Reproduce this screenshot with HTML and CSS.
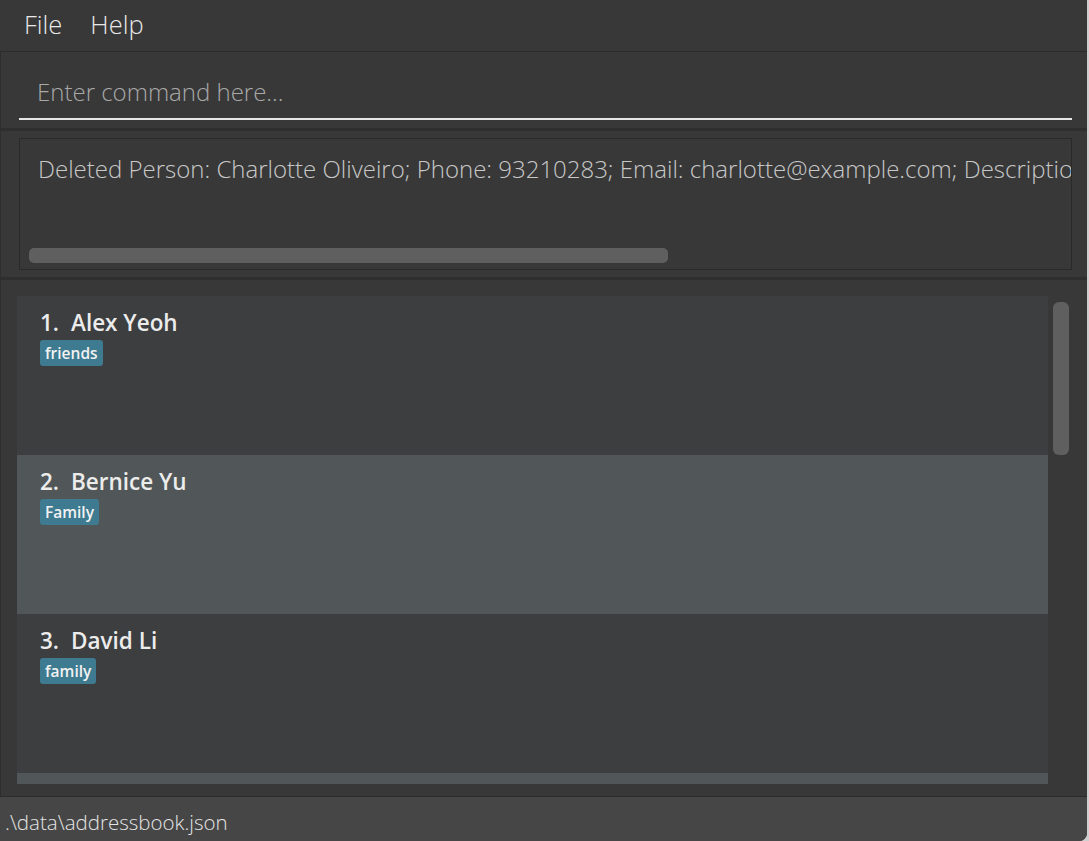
FILE: index.html
```html
<!DOCTYPE html>
<html>
<head>
<meta charset="utf-8">
<link rel="stylesheet" href="styles.css">
</head>
<body>
<div class="app">
  <div class="menubar">
    <span class="menu-item">File</span>
    <span class="menu-item">Help</span>
  </div>
  <div class="command-pane">
    <div class="command-field">Enter command here...</div>
  </div>
  <div class="result-pane">
    <div class="result-box">
      <div class="result-text">Deleted Person: Charlotte Oliveiro; Phone: 93210283; Email: charlotte@example.com; Description: </div>
      <div class="hscroll"><div class="hthumb"></div></div>
    </div>
  </div>
  <div class="list-pane">
    <div class="list">
      <div class="cell even">
        <div class="name"><span class="idx">1.</span>Alex Yeoh</div>
        <div class="tags"><span class="tag">friends</span></div>
      </div>
      <div class="cell odd">
        <div class="name"><span class="idx">2.</span>Bernice Yu</div>
        <div class="tags"><span class="tag">Family</span></div>
      </div>
      <div class="cell even">
        <div class="name"><span class="idx">3.</span>David Li</div>
        <div class="tags"><span class="tag">family</span></div>
      </div>
      <div class="cell odd"></div>
    </div>
    <div class="vscroll"><div class="vthumb"></div></div>
  </div>
  <div class="statusbar">.\data\addressbook.json</div>
</div>
</body>
</html>
```
FILE: styles.css
```css
html, body {
  margin: 0;
  padding: 0;
  background: #cfcfcf;
  height: 841px;
  overflow: hidden;
}
.app {
  width: 1087px;
  height: 841px;
  background: #383838;
  display: flex;
  flex-direction: column;
  font-family: "Open Sans", "Liberation Sans", sans-serif;
  border-bottom-right-radius: 8px;
  overflow: hidden;
}
.menubar {
  flex: 0 0 52px;
  display: flex;
  align-items: center;
  gap: 28px;
  padding-left: 24px;
  border-bottom: 1px solid #2c2c2c;
  box-sizing: border-box;
}
.menu-item {
  color: #e8e8e8;
  font-size: 25.5px;
  font-weight: 300;
  line-height: 1;
  position: relative;
  top: -1px;
}
.command-pane {
  flex: 0 0 79px;
  box-sizing: border-box;
  padding: 0 15px 0 18px;
  border-bottom: 3px solid #2e2e2e;
  border-left: 1px solid #2e2e2e;
  display: flex;
  align-items: flex-end;
}
.command-field {
  flex: 1;
  height: 50px;
  box-sizing: border-box;
  border-bottom: 2px solid #e6e6e6;
  color: #a8a8a8;
  font-size: 24px;
  font-weight: 300;
  padding-left: 18px;
  line-height: 26px;
  padding-top: 9px;
  margin-bottom: 8px;
}
.result-pane {
  flex: 0 0 149px;
  box-sizing: border-box;
  padding: 7px 15px 7px 18px;
  border-bottom: 3px solid #2e2e2e;
  border-left: 1px solid #2e2e2e;
}
.result-box {
  height: 100%;
  box-sizing: border-box;
  border: 1px solid #2a2a2a;
  position: relative;
  overflow: hidden;
  padding: 15px 0 0 18px;
}
.result-text {
  color: #c8c8c8;
  font-size: 24px;
  font-weight: 300;
  white-space: nowrap;
  line-height: 30px;
}
.hscroll {
  position: absolute;
  left: 9px;
  right: 0;
  bottom: 6px;
  height: 15px;
}
.hthumb {
  width: 639px;
  height: 15px;
  border-radius: 5px;
  background: #5f5f5f;
}
.list-pane {
  flex: 0 0 517px;
  min-height: 0;
  overflow: hidden;
  box-sizing: border-box;
  padding: 16px 0 12px 16px;
  display: flex;
  border-bottom: 1px solid #2b2b2b;
  border-left: 1px solid #2e2e2e;
}
.list {
  width: 1031px;
  min-height: 0;
  overflow: hidden;
  display: flex;
  flex-direction: column;
}
.cell {
  flex: 0 0 159px;
  box-sizing: border-box;
  padding: 11px 0 0 23px;
}
.even { background: #3c3e3f; }
.odd { background: #515658; }
.name {
  color: #ececec;
  font-size: 22.5px;
  font-weight: 600;
  line-height: 32px;
  display: flex;
}
.idx {
  width: 31px;
  flex: 0 0 auto;
}
.tags {
  margin-top: 1px;
  display: flex;
}
.tag {
  background: #3e7b91;
  color: #f2f2f2;
  font-size: 15.5px;
  font-weight: 600;
  line-height: 26px;
  padding: 0 5px;
  border-radius: 3px;
}
.vscroll {
  width: 38px;
  padding: 6px 0 0 5px;
  box-sizing: border-box;
}
.vthumb {
  width: 16px;
  height: 153px;
  border-radius: 6px;
  background: #5f5f5f;
}
.statusbar {
  flex: 1 1 auto;
  min-height: 0;
  background: #464646;
  color: #e4e4e4;
  font-size: 20.5px;
  font-weight: 300;
  padding-left: 5px;
  line-height: 50px;
}
```
